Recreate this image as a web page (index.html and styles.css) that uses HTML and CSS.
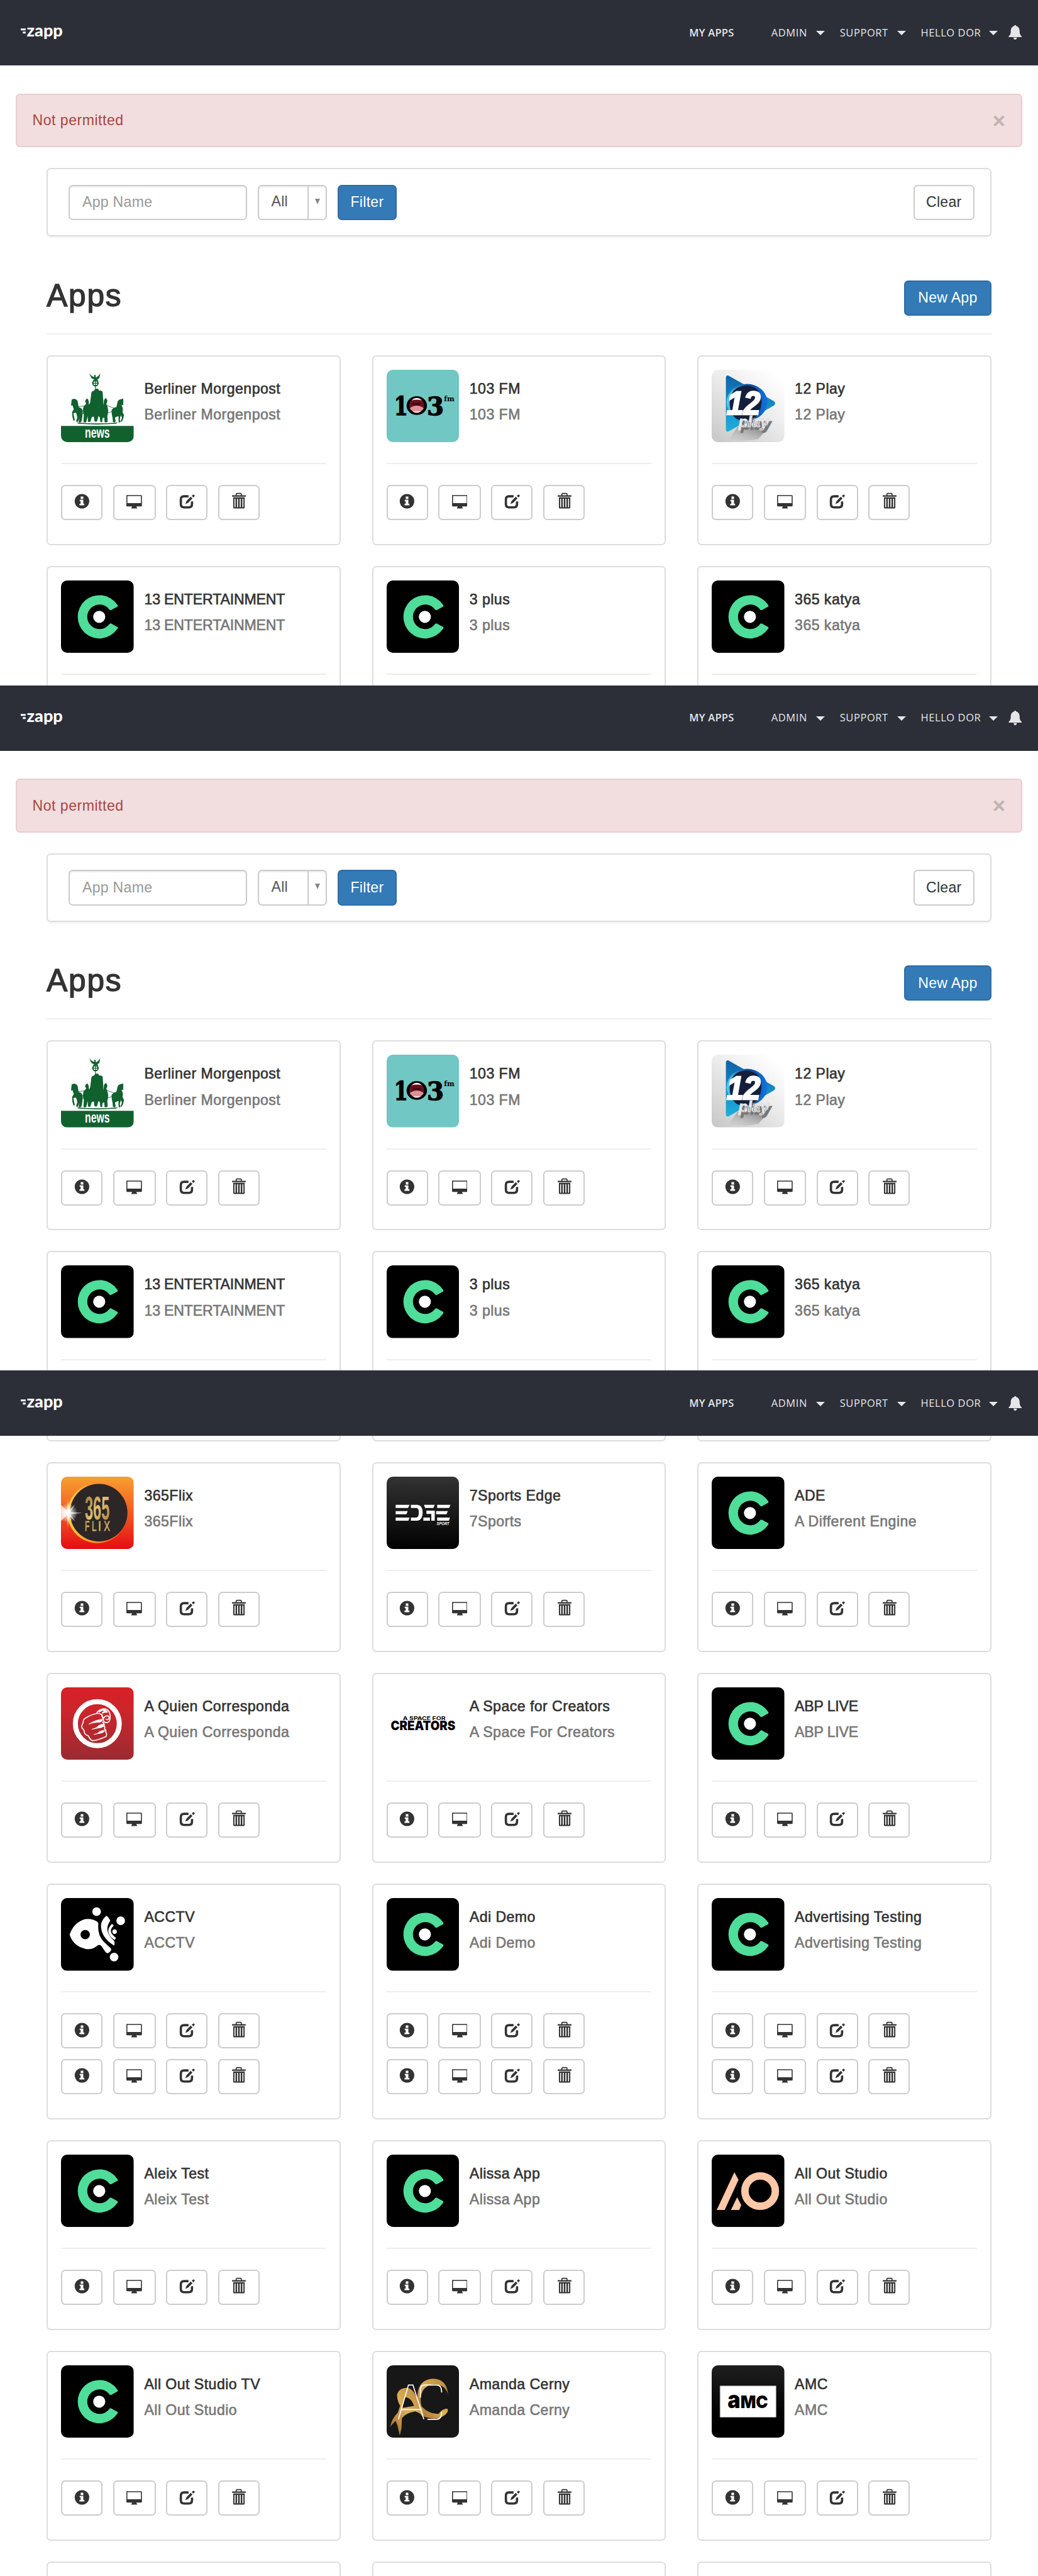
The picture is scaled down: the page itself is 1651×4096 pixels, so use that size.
FILE: index.html
```html
<!DOCTYPE html>
<html lang="en">
<head>
<meta charset="utf-8">
<title>Zapp - Apps</title>
<link rel="stylesheet" href="styles.css">
</head>
<body>
<svg class="defs" aria-hidden="true">
  <defs>
    <linearGradient id="g-flix" x1="0" y1="0" x2="0" y2="1"><stop offset="0" stop-color="#f8a030"/><stop offset=".5" stop-color="#f05a22"/><stop offset="1" stop-color="#e60a14"/></linearGradient>
    <linearGradient id="g-ring" x1="0" y1="0" x2="1" y2="0"><stop offset="0" stop-color="#ffd040"/><stop offset=".5" stop-color="#ff8a20"/><stop offset="1" stop-color="#e8401c"/></linearGradient>
    <linearGradient id="g-gold" x1="0" y1="0" x2="1" y2="1"><stop offset="0" stop-color="#8c6a28"/><stop offset=".5" stop-color="#e3c273"/><stop offset="1" stop-color="#a07a30"/></linearGradient>
    <radialGradient id="g-star"><stop offset="0" stop-color="#fff"/><stop offset=".35" stop-color="#fff" stop-opacity=".75"/><stop offset="1" stop-color="#fff" stop-opacity="0"/></radialGradient>
    <linearGradient id="g-edge" x1="0" y1="0" x2="0" y2="1"><stop offset="0" stop-color="#333"/><stop offset="1" stop-color="#000"/></linearGradient>
    <linearGradient id="g-amc" x1="0" y1="0" x2="0" y2="1"><stop offset="0" stop-color="#1e1e1e"/><stop offset=".7" stop-color="#000"/></linearGradient>
    <linearGradient id="g-red" x1="0" y1="0" x2="0" y2="1"><stop offset="0" stop-color="#d92027"/><stop offset=".3" stop-color="#cd252b"/><stop offset="1" stop-color="#9a2b31"/></linearGradient>
    <linearGradient id="g-silver" x1="0" y1="1" x2=".8" y2="0"><stop offset="0" stop-color="#c6c6c6"/><stop offset=".6" stop-color="#ececec"/><stop offset="1" stop-color="#fff"/></linearGradient>
    <linearGradient id="g-play" x1="0" y1="0" x2="0" y2="1"><stop offset="0" stop-color="#0f62a8"/><stop offset="1" stop-color="#1cb0de"/></linearGradient>
    <linearGradient id="g-orb" x1="0" y1="0" x2="1" y2="0"><stop offset="0" stop-color="#4fd0ee"/><stop offset=".5" stop-color="#0a4a9c"/><stop offset="1" stop-color="#1272dc"/></linearGradient>
    <linearGradient id="g-brush" x1="0" y1="1" x2="1" y2="0"><stop offset="0" stop-color="#9c6528"/><stop offset=".5" stop-color="#dcae58"/><stop offset="1" stop-color="#b88538"/></linearGradient>
    <linearGradient id="g-shade" x1="1" y1="0" x2="0" y2="1"><stop offset="0" stop-color="#555" stop-opacity=".8"/><stop offset="1" stop-color="#999" stop-opacity="0"/></linearGradient>
  </defs>
</svg>
<template id="artwork"><svg>
  <symbol id="i-info" viewBox="0 0 30 32"><circle cx="15" cy="17" r="14" fill="#333"/><path fill="#fff" d="M12.600 8h5v4.600h-5zM10.600 14.200h7v7.600h2v3h-9.400v-3h2.200v-4.800h-1.800z"/></symbol>
  <symbol id="i-screen" viewBox="0 0 30 32"><path fill="#333" fill-rule="evenodd" d="M2 5h26.400a1.800 1.800 0 0 1 1.600 1.800V25a2 2 0 0 1-2 2h-8.400v1.800l1 .6V31h-11v-1.600l1-.6V27H2a2 2 0 0 1-2-2V6.800a1.800 1.800 0 0 1 2-1.800zM1.900 7v13.600h26.200V7z"/></symbol>
  <symbol id="i-edit" viewBox="0 0 30 32"><path fill="none" stroke="#333" stroke-width="4.400" d="M18 7.400H9.500Q3.200 7.400 3.200 13.500v9.300q0 6 6.300 6h9q6.200 0 6.200-6v-5.500"/><path fill="#fff" d="M10 24.500l3-8L24 4l6 5-11 13z"/><path fill="#333" d="M11.800 22.300l2.200-5.700 8.200-8.300 3.400 3.300-8.300 8.300zM24.300 6.700l2.300-2.200q1.300-.8 2.600.4t.2 2.700l-2.100 2.200z"/></symbol>
  <symbol id="i-trash" viewBox="0 0 30 32"><path fill="none" stroke="#333" stroke-width="2" d="M10.500 6.500V3.700Q10.500 2 12.200 2h6.600q1.700 0 1.700 1.700v2.800"/><path fill="#333" d="M2.500 5.600h26.500v2.500H2.500zM4.800 9.500h22v19.500q0 2-2 2h-18q-2 0-2-2z"/><path stroke="#fff" stroke-width="2" d="M8.200 12v16.500M13.200 12v16.500M18.300 12v16.500M23.400 12v16.500"/></symbol>

  <symbol id="l-c" viewBox="0 0 420 420"><path fill="#000" d="M0 0h420v420H0z"/><path fill="#4fdd9a" d="M327 151Q331 145 324 138A125 125 0 1 0 324 282Q331 275 327 269L292 250Q286 246 280 252A71 71 0 1 1 280 168Q286 174 292 170z"/><circle cx="221" cy="210" r="35" fill="#fff"/></symbol>

  <symbol id="l-berliner" viewBox="0 0 420 420">
    <path fill="#fff" d="M0 0h420v420H0z"/><path fill="#11612f" d="M0 324h420v96H0z"/>
    <g fill="#11612f">
      <path d="M164 20q5 18 14 30l14 5-9 9 8 1 4-6 4 4 5-4 5 6 8-2-8-8 12-6q5-16 6-29-9 17-22 24l-4-1-1-12-6-3-3 5 2 9q-15-2-29-22z"/>
      <circle cx="199" cy="77" r="19"/><path d="M197 90h4v24h-4z"/>
      <path d="M176 132q2-9 14-10l7-10q10-6 20 0l2 8q20-2 22 10l3 40 1 36 3-22q-1-9 4-14l7-7 5 6 4 8q0 12-6 18l6 16q7 20 4 40l-4 18 2 31-8 4-10-1-2-28q-6 4-10 4l-2 24h-10l-4-30-8-4-8 30h-14l-4-28-12 2-8 28h-14l-2-34-8 36-10 2-6-5 2-38q-10-28 0-52l14-14-6-12q0-10 6-14l8-4 6 14 2 22 6-10z"/>
      <path d="M62 172l14-5q14 2 20 14l6 34q20 6 24 22l-2 30q-2 18-6 34l-12 4-4-5 4-22-8 22-8 2-2-7 6-20q-2-16-8-28l-14 4 4 22 4 18-8 3-6-22-2-28 10-16-8-24-8 4z"/>
      <path d="M360 166l-10 3q-16 2-22 14l-8 32q-22 4-28 20l2 24q6 22 6 42l12 3 4-7-4-20 14-8 8 2-2 12 2 22 10-2-4-16q2-16 8-24l4 16-8 22 8-2 8-16 4-22-8-16 2-20-8-24 10 4z"/>
      <path d="M90 304q120 12 240 0l-12 8q-110 8-216 0z"/>
    </g>
    <path fill="none" stroke="#11612f" stroke-width="3" d="M98 213l56-6M262 205l46 17M124 252h22M272 250l24-10"/>
    <g fill="#fff"><path d="M189 68h8v7h-8zM201 68h8v7h-8zM189 80h8v7h-8zM201 80h8v7h-8z"/><text x="138" y="392" class="t-cond" font-size="84" textLength="144" lengthAdjust="spacingAndGlyphs">news</text></g>
  </symbol>

  <symbol id="l-103" viewBox="0 0 420 420"><path fill="#70c7c3" d="M0 0h420v420H0z"/><g class="t-slab" stroke="#000" stroke-width="5"><text x="43" y="260" font-size="146" textLength="80" lengthAdjust="spacingAndGlyphs">1</text><text x="233" y="260" font-size="144" textLength="98" lengthAdjust="spacingAndGlyphs">3</text></g><text x="332" y="182" class="t-slab" font-size="42" textLength="60" lengthAdjust="spacingAndGlyphs">fm</text><ellipse cx="174" cy="207" rx="59" ry="54"/><ellipse cx="174" cy="207" rx="43" ry="43" fill="#6b0f1e"/><path fill="#fff" d="M144 177q30-28 60 0-30-8-60 0zM146 238q28 20 56 0z"/><path fill="#df919a" d="M134 222q40-30 80 0-8 20-40 20t-40-20z"/><path fill="#3e0812" d="M152 188l22 6 20-6v14l-20 4-22-4z"/></symbol>

  <symbol id="l-12" viewBox="0 0 420 420"><path fill="url(#g-silver)" d="M0 0h420v420H0z"/><path fill="url(#g-shade)" d="M150 330l180 0-60 70q-90 20-170 0z"/><path fill="url(#g-play)" d="M82 46Q84 28 100 35L360 182q14 12 0 24L100 355q-16 6-18-10z"/><ellipse cx="204" cy="187" rx="118" ry="105" fill="url(#g-orb)"/><path fill="#141f3d" d="M104 190Q112 92 200 92 288 96 288 190 280 290 190 298 104 290 104 190z"/><text x="86" y="257" class="t-bi" font-size="188" fill="#fff" stroke="#fff" stroke-width="9" textLength="196" lengthAdjust="spacingAndGlyphs">12</text><text x="155" y="331" class="t-bi play" font-size="84" fill="#eee" stroke="#ddd" stroke-width="4" textLength="174" lengthAdjust="spacingAndGlyphs">play</text></symbol>

  <symbol id="l-flix" viewBox="0 0 420 420"><path fill="url(#g-flix)" d="M0 0h420v420H0z"/><circle cx="211" cy="210" r="174" fill="url(#g-ring)"/><circle cx="218" cy="208" r="166" fill="#2c2627"/><g fill="url(#g-gold)"><text x="138" y="247" class="t-cond" font-size="190" textLength="143" lengthAdjust="spacingAndGlyphs">365</text><g class="t-cond-r" font-size="80" stroke="#caa75c" stroke-width="3"><text x="138" y="313" textLength="27" lengthAdjust="spacingAndGlyphs">F</text><text x="178" y="313" textLength="27" lengthAdjust="spacingAndGlyphs">L</text><text x="214" y="313" textLength="18" lengthAdjust="spacingAndGlyphs">I</text><text x="248" y="313" textLength="35" lengthAdjust="spacingAndGlyphs">X</text></g></g><circle cx="40" cy="210" r="56" fill="url(#g-star)"/><path fill="#fff" d="M40 130l5 68 38-38-30 44 70 6-70 6 30 44-38-38-5 74-5-74-35 34V164l35 34z" opacity=".7"/></symbol>

  <symbol id="l-edge" viewBox="0 0 420 420"><path fill="url(#g-edge)" d="M0 0h420v420H0z"/><g fill="#fff"><path d="M52 163h80l-8 18H52zM52 199h70l-8 18H52zM52 236h80l-6 18H52zM140 163h38q30 2 30 45t-30 46h-38v-18h32q14-2 14-28t-14-27h-32zM216 163h62l-8 18h-48zM230 196h48v58h-20v-39h-28zM212 236h38v18h-38zM292 163h77l-8 18h-69zM286 199h68l-8 18h-60zM292 236h74l-6 18h-68z"/><text x="289" y="281" class="t-bi" font-size="27" textLength="73" lengthAdjust="spacingAndGlyphs">SPORT</text></g></symbol>

  <symbol id="l-quien" viewBox="0 0 420 420"><path fill="url(#g-red)" d="M0 0h420v420H0z"/><circle cx="210" cy="210" r="127" fill="none" stroke="#fff" stroke-width="29"/><g fill="none" stroke="#fff" stroke-width="6" stroke-linejoin="round" stroke-linecap="round"><path d="M240 176q-2-22-24-26-36 4-72 26-18 8-16 30-12 14-6 30 10 6 12 16 0 22 24 28 10 22 24 28 30-2 78-24 8-10-1-26 4-12-8-16 6-12-2-20 2-14-8-22"/><path d="M162 212q40-26 80-28-4 20-34 18-26 2-46 10zM180 242q26-6 36-20 18-12 36-8-2 18-32 20-20 4-40 8zM192 272q22-4 28-14 16-12 34-8-8 14-32 16z" fill="#fff" stroke-width="3"/><path d="M206 150q14-28 50-26 34 10 27 62-4 18-22 18-16-4-16-18 2-20 24-22 14 6 6 20-8 6-14 0M244 180l-8-26"/><path d="M222 140q24-20 44 2-16-2-24 4" stroke-width="9"/></g></symbol>

  <symbol id="l-creators" viewBox="0 0 420 420"><path fill="#fff" d="M0 0h420v420H0z"/><text x="94" y="190" class="t-geo-m" font-size="26" textLength="246" lengthAdjust="spacingAndGlyphs">A SPACE FOR</text><text x="24" y="248" class="t-geo" font-size="73" textLength="373" lengthAdjust="spacingAndGlyphs">CREATORS</text></symbol>

  <symbol id="l-acctv" viewBox="0 0 420 420"><path fill="#000" d="M0 0h420v420H0z"/><g fill="#fff"><path fill-rule="evenodd" d="M50 212Q72 142 140 122 180 116 212 138q6 8 3 24-2 60 36 94l38 36q6 12-14 25-10 6-20-8l-20-30q-12-16-30 0-28 22-62 15Q72 280 50 212zM140 184a27 27 0 1 0 .1 0z"/><path d="M262 103q12 4 23 28-26 36-12 72 12 26 34 44 6 12 0 28-76-48-76-116 2-32 31-56z"/><circle cx="310" cy="194" r="13"/><circle cx="206" cy="79" r="25"/><circle cx="345" cy="131" r="25"/><circle cx="307" cy="341" r="25"/></g><path fill="none" stroke="#fff" stroke-width="15" d="M300 154Q256 196 314 236"/></symbol>

  <symbol id="l-ao" viewBox="0 0 420 420"><path fill="#000" d="M0 0h420v420H0z"/><path fill="#ffc9a8" d="M131 102l24 43L75 320H29zM147 246l24 46-12 28h-48z"/><ellipse cx="280" cy="210.500" rx="88" ry="87.500" fill="none" stroke="#ffc9a8" stroke-width="43"/></symbol>

  <symbol id="l-ac" viewBox="0 0 420 420"><path fill="#171717" d="M0 0h420v420H0z"/><g fill="url(#g-brush)"><path d="M355 168q-12-44-52-54-60-16-94 32-22 46-6 92 44 46 98 42 20-28 48-30 12 10-4 30-42 42-112 22-18-4-34-12-34-60-18-140 14-66 82-73 84-2 92 91z"/><path fill-rule="evenodd" d="M60 170q10-40 60-40 30 4 50 50l36 70 10 40-50-24q-60 10-78 40l-2 56-10 44-14-60-10-24q-12 10-32 34 10-50 44-82l14-40q-18-30-18-64zm44 14l-12 62 66-12q-16-50-54-50z"/></g><path fill="none" stroke="#fff" stroke-width="6" d="M68 312L126 114h26l63 198M86 256h117M195 187v-46q0-27 24-27h72q27 0 27 43M235 312h54q29 0 29-45"/></symbol>

  <symbol id="l-amc" viewBox="0 0 420 420"><path fill="url(#g-amc)" d="M0 0h420v420H0z"/><path fill="#fff" stroke="#999" stroke-width="3" d="M48 119h324v181H48z"/><g class="t-blk"><text x="92" y="248" font-size="136" textLength="74" lengthAdjust="spacingAndGlyphs">a</text><text x="166" y="247" font-size="100" textLength="160" lengthAdjust="spacingAndGlyphs">MC</text></g></symbol>

  <symbol id="bell" viewBox="0 0 26 28"><path fill="#e6e6e8" d="M11.300 1.500a1.700 1.700 0 0 1 3.400 0C20 3 21.500 7 21.500 11c0 6 1.500 8.500 4 10.500V23H.5v-1.500c2.500-2 4-4.500 4-10.500 0-4 1.500-8 6.800-9.500zM9.500 24h7q-.8 4-3.500 4t-3.500-4z"/></symbol>
  <symbol id="zapp" viewBox="0 0 84 44"><g fill="#fff"><path d="M0 12.500h9.500V16H0zM4 18.500h5.500V22H4z"/><text x="11.500" y="28.300" class="t-logo" font-size="32" textLength="69.500" lengthAdjust="spacingAndGlyphs">zapp</text></g></symbol>
</svg></template>
<main id="root"></main>
<script src="script.js"></script>
</body>
</html>
```
FILE: styles.css
```css
/* All lengths are in rem so that the page scales from one value */
html { font-size: 8.255px; }
* { box-sizing: border-box; }
body { margin: 0; background: #fff; color: #333; font: 2.8rem/4rem "Liberation Sans", Arial, sans-serif; letter-spacing: .03rem; }
.defs { position: absolute; width: 0; height: 0; }
h2, h3, p { margin: 0; font-weight: 400; }
svg { letter-spacing: 0; -webkit-text-stroke: 0; }

.t-cond { font-family: "Liberation Sans Narrow", "Liberation Sans", sans-serif; font-weight: 700; }
.t-cond-r { font-family: "Liberation Sans Narrow", "Liberation Sans", sans-serif; }
.t-slab { font-family: "DejaVu Serif", serif; font-weight: 700; }
.t-bi { font-family: "Liberation Sans", sans-serif; font-weight: 700; font-style: italic; }
.t-geo { font-family: Inter, sans-serif; font-weight: 900; }
.t-geo-m { font-family: Inter, sans-serif; font-weight: 700; }
.t-blk { font-family: Inter, sans-serif; font-weight: 900; }
.t-logo { font-family: Lato, sans-serif; font-weight: 900; }
.play { text-shadow: 4px 4px 0 #777; }

.screen { height: 132rem; overflow: hidden; display: flex; flex-direction: column; }
.screen-long { height: 232.2rem; }
.screen > * { flex: none; }

.navbar { height: 12.6rem; padding: 0 3.1rem 0 4rem; background: #2c2f38; display: flex; justify-content: space-between; align-items: center; position: relative; z-index: 1; }
.brand { width: 8.4rem; height: 4.4rem; margin-top: .4rem; }
.menu { display: grid; grid-template-columns: 15.8rem 13.2rem 15.6rem 16.9rem 2.6rem; align-items: center; color: #e6e6e8; font: 2rem/3rem "Open Sans", sans-serif; letter-spacing: .07rem; }
.menu-item { display: flex; justify-content: space-between; align-items: center; padding-right: 2.9rem; white-space: nowrap; }
.menu-item.active { font-weight: 600; letter-spacing: .03rem; }
.menu-item.last { padding-right: 2rem; }
.caret { border: .9rem solid transparent; border-top-color: currentColor; border-bottom: 0; margin-top: .2rem; }
.bell { width: 2.6rem; height: 2.8rem; }

.alert { margin: 5.4rem 3rem 4rem; height: 10.4rem; padding: 3rem; border: 2px solid #ebccd1; border-radius: .8rem; background: #f2dede; color: #a94442; display: flex; justify-content: space-between; align-items: center; letter-spacing: .06rem; }
.close { font-size: 4.2rem; font-weight: 700; color: #c2b2b2; margin-top: .2rem; }

.filter { margin: 0 9rem; height: 13.2rem; padding: 0 3rem 0 4rem; border: 2px solid #ddd; border-radius: .8rem; box-shadow: 0 2px 2px rgba(0,0,0,.05); display: flex; align-items: center; gap: 2rem; }
.field { width: 34.4rem; height: 6.8rem; padding: 0 2.4rem; border: 2px solid #ccc; border-radius: .8rem; box-shadow: inset 0 2px 2px rgba(0,0,0,.075); color: #999; display: flex; align-items: center; }
.select { width: 13.4rem; height: 6.8rem; border: 2px solid #ccc; border-radius: .8rem; box-shadow: inset 0 2px 2px rgba(0,0,0,.075); color: #555; display: flex; align-items: stretch; }
.select-value { flex: 1; padding: 1rem 0 0 2.4rem; }
.select-arrow { width: 3.6rem; border-left: 2px solid #ccc; display: flex; align-items: center; justify-content: center; }
.select-arrow::before { content: ""; border: .6rem solid transparent; border-top: 1.1rem solid #888; border-bottom: 0; margin-top: -.4rem; }
.btn { height: 6.8rem; border: 2px solid #ccc; border-radius: .8rem; background: #fff; color: #333; display: flex; align-items: center; justify-content: center; }
.btn-primary { background: #337ab7; border-color: #2e6da4; color: #fff; }
.btn-filter { width: 11.4rem; }
.btn-clear { width: 11.8rem; margin-left: auto; }
.btn-new { width: 16.8rem; }

.heading { margin: 8.4rem 9rem 0; height: 10.4rem; border-bottom: 2px solid #eee; display: flex; justify-content: space-between; align-items: flex-start; }
.heading h2 { font-size: 6rem; line-height: 6.8rem; margin-top: -.5rem; letter-spacing: .22rem; -webkit-text-stroke: .17rem currentColor; }

.grid { margin: 4rem 9rem 0; display: grid; grid-template-columns: repeat(3, 1fr); gap: 4rem 6rem; }
.grid-scrolled { margin-top: -35.6rem; }
.card { height: 36.6rem; padding: calc(2.8rem - 2px); border: 2px solid #ddd; border-radius: .8rem; }
.card-tall { height: 45.4rem; }
.card-head { height: 18.2rem; border-bottom: 2px solid #eee; display: flex; gap: 2rem; }
.logo { width: 14rem; height: 14rem; border-radius: 1.2rem; }
.names { padding-top: 1.2rem; line-height: 5rem; letter-spacing: .055rem; white-space: nowrap; -webkit-text-stroke: .075rem currentColor; }
.names h3 { font-size: 2.8rem; }
.names p { color: #777; -webkit-text-stroke-color: #777; }
.names.caps { letter-spacing: -.02rem; }
.actions { margin-top: 4rem; display: flex; gap: 2rem; }
.actions + .actions { margin-top: 2rem; }
.actions .btn { width: 8rem; }
.actions .btn-wide { width: 8.2rem; }
.icon { width: 3rem; height: 3.2rem; margin-bottom: .6rem; }
```
FILE: script.js
```js
const artwork = document.getElementById("artwork").content;
const draw = (id, cls) => {
  const symbol = artwork.getElementById(id);
  return `<svg class="${cls}" viewBox="${symbol.getAttribute("viewBox")}">${symbol.innerHTML}</svg>`;
};

const firstPage = [
  ["Berliner Morgenpost", "Berliner Morgenpost", "berliner"],
  ["103 FM", "103 FM", "103"],
  ["12 Play", "12 Play", "12"],
  ["13 ENTERTAINMENT", "13 ENTERTAINMENT", "c", 0],
  ["3 plus", "3 plus", "c", 0],
  ["365 katya", "365 katya", "c", 0],
];
const scrolledPage = [
  null, null, null,
  ["365Flix", "365Flix", "flix"],
  ["7Sports Edge", "7Sports", "edge"],
  ["ADE", "A Different Engine", "c"],
  ["A Quien Corresponda", "A Quien Corresponda", "quien"],
  ["A Space for Creators", "A Space For Creators", "creators"],
  ["ABP LIVE", "ABP LIVE", "c"],
  ["ACCTV", "ACCTV", "acctv", 2],
  ["Adi Demo", "Adi Demo", "c", 2],
  ["Advertising Testing", "Advertising Testing", "c", 2],
  ["Aleix Test", "Aleix Test", "c"],
  ["Alissa App", "Alissa App", "c"],
  ["All Out Studio", "All Out Studio", "ao"],
  ["All Out Studio TV", "All Out Studio", "c"],
  ["Amanda Cerny", "Amanda Cerny", "ac"],
  ["AMC", "AMC", "amc"],
  null, null, null,
];

const button = (id, wide) => `<a class="btn${wide ? " btn-wide" : ""}">${draw(id, "icon")}</a>`;
const actions = `<div class="actions">${button("i-info")}${button("i-screen", true)}${button("i-edit")}${button("i-trash")}</div>`;

function card(app) {
  if (!app) return `<article class="card"></article>`;
  const [name, owner, logo, rows = 1] = app;
  const caps = name === name.toUpperCase() && name.length > 6 ? " caps" : "";
  return `<article class="card${rows === 2 ? " card-tall" : ""}">
    <div class="card-head">${draw("l-" + logo, "logo")}<div class="names${caps}"><h3>${name}</h3><p>${owner}</p></div></div>
    ${actions.repeat(rows)}</article>`;
}

const item = (label, cls = "", caret = true) => `<span class="menu-item ${cls}">${label}${caret ? '<i class="caret"></i>' : ""}</span>`;
const navbar = `<nav class="navbar">${draw("zapp", "brand")}<div class="menu">
  ${item("MY APPS", "active", false)}${item("ADMIN")}${item("SUPPORT")}${item("HELLO DOR", "last")}${draw("bell", "bell")}</div></nav>`;

const listScreen = `<section class="screen">${navbar}
  <div class="alert"><span>Not permitted</span><span class="close">×</span></div>
  <div class="filter"><div class="field">App Name</div>
    <div class="select"><span class="select-value">All</span><span class="select-arrow"></span></div>
    <a class="btn btn-primary btn-filter">Filter</a><a class="btn btn-clear">Clear</a></div>
  <div class="heading"><h2>Apps</h2><a class="btn btn-primary btn-new">New App</a></div>
  <div class="grid">${firstPage.map(card).join("")}</div></section>`;

const scrolledScreen = `<section class="screen screen-long">${navbar}<div class="grid grid-scrolled">${scrolledPage.map(card).join("")}</div></section>`;

document.getElementById("root").innerHTML = listScreen + listScreen + scrolledScreen;
```
